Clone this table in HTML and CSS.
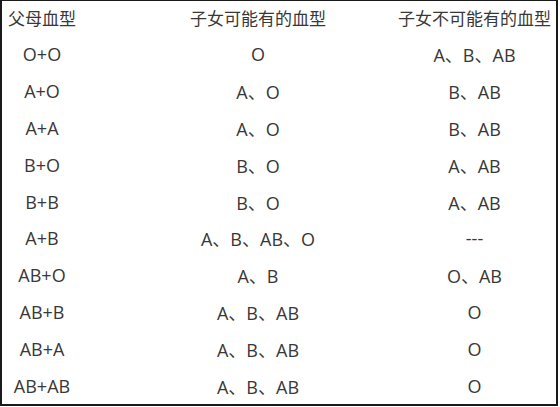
FILE: index.html
```html
<!DOCTYPE html>
<html lang="zh">
<head>
<meta charset="utf-8">
<link rel="stylesheet" href="styles.css">
</head>
<body>
<div class="table">
  <div class="cell c1 head">父母血型</div>
  <div class="cell c2 head">子女可能有的血型</div>
  <div class="cell c3 head">子女不可能有的血型</div>

  <div class="cell c1">O+O</div>
  <div class="cell c2">O</div>
  <div class="cell c3">A、B、AB</div>

  <div class="cell c1">A+O</div>
  <div class="cell c2">A、O</div>
  <div class="cell c3">B、AB</div>

  <div class="cell c1">A+A</div>
  <div class="cell c2">A、O</div>
  <div class="cell c3">B、AB</div>

  <div class="cell c1">B+O</div>
  <div class="cell c2">B、O</div>
  <div class="cell c3">A、AB</div>

  <div class="cell c1">B+B</div>
  <div class="cell c2">B、O</div>
  <div class="cell c3">A、AB</div>

  <div class="cell c1">A+B</div>
  <div class="cell c2">A、B、AB、O</div>
  <div class="cell c3">---</div>

  <div class="cell c1">AB+O</div>
  <div class="cell c2">A、B</div>
  <div class="cell c3">O、AB</div>

  <div class="cell c1">AB+B</div>
  <div class="cell c2">A、B、AB</div>
  <div class="cell c3">O</div>

  <div class="cell c1">AB+A</div>
  <div class="cell c2">A、B、AB</div>
  <div class="cell c3">O</div>

  <div class="cell c1">AB+AB</div>
  <div class="cell c2">A、B、AB</div>
  <div class="cell c3">O</div>
</div>
</body>
</html>
```

FILE: styles.css
```css
html, body {
  margin: 0;
  padding: 0;
  background: #ffffff;
}

.table {
  box-sizing: border-box;
  width: 558px;
  height: 406px;
  border-top: 1px solid #1a1a1a;
  border-left: 2px solid #1a1a1a;
  border-right: 2px solid #1a1a1a;
  border-bottom: 2px solid #1a1a1a;
  display: grid;
  grid-template-columns: 80px 1fr 163px;
  grid-template-rows: 35px repeat(10, 1fr);
  font-family: "Open Sans", "Noto Sans CJK SC", sans-serif;
  font-size: 18px;
  font-weight: 400;
  color: #383838;
}

.cell {
  display: flex;
  align-items: center;
  justify-content: center;
  white-space: nowrap;
}

.head {
  font-size: 17px;
  padding-bottom: 2px;
}

.c2 {
  padding-left: 41px;
}
```
